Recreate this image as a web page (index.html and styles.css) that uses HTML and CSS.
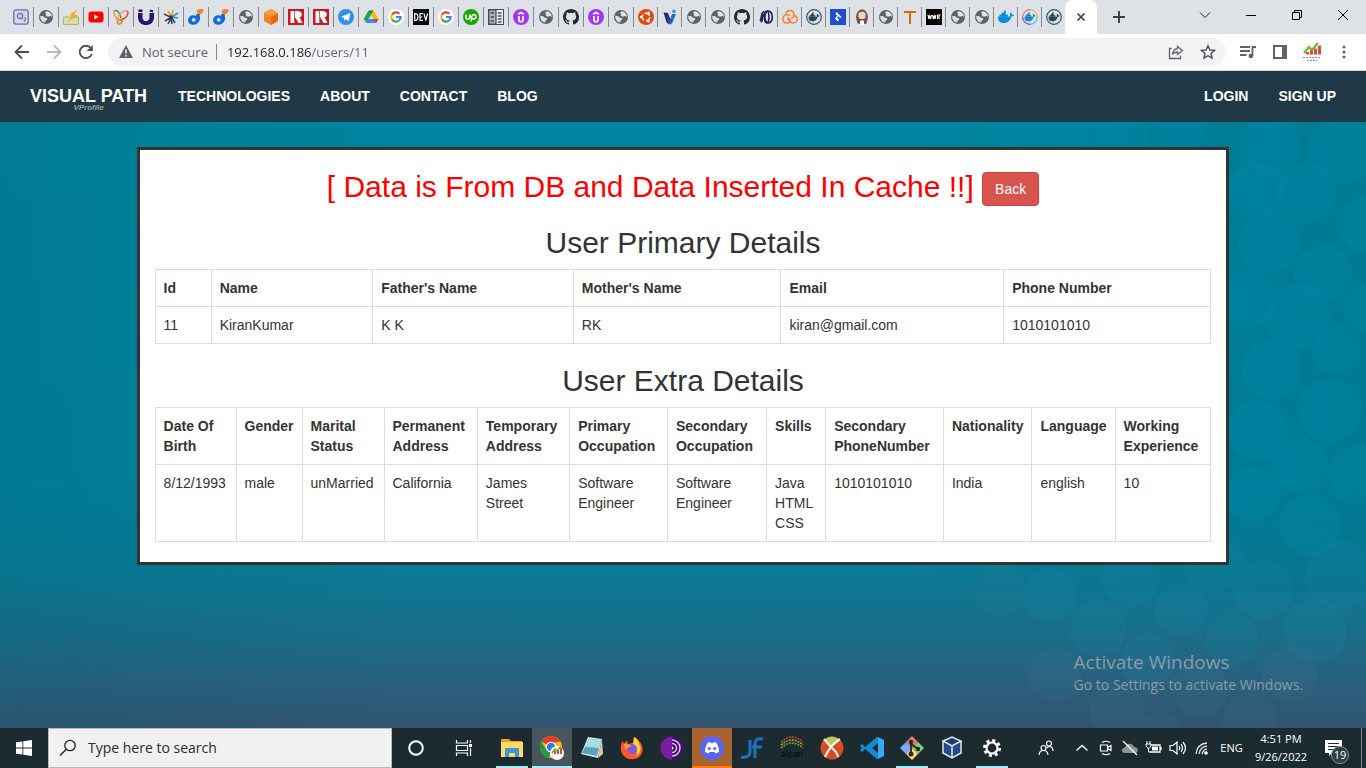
FILE: index.html
```html
<!DOCTYPE html>
<html lang="en">
<head>
<meta charset="utf-8">
<title>User Details</title>
<link rel="stylesheet" href="styles.css">
</head>
<body>
<svg class="defs" aria-hidden="true">
  <symbol id="globe" viewBox="0 0 16 16"><circle cx="8" cy="8" r="7" fill="#5f6368"/><path d="M2.300 6.700 5.200 7.200 6.800 8.700 9 9v1.800L7.300 12v1.800A6 6 0 0 1 2.300 6.700zM8.600 2.200 7 4 8.200 5.300l-.4 1.500 2.200.9 2.300-.6 1.600.9A5.900 5.900 0 0 0 8.600 2.200z" fill="#dee1e6"/></symbol>
  <symbol id="search-doc" viewBox="0 0 16 16"><rect x=".8" y=".8" width="14.400" height="14.400" rx="2.500" fill="#d3d5e8" stroke="#6c70a8" stroke-width="1.300"/><circle cx="7" cy="7" r="2.600" fill="none" stroke="#6c70a8" stroke-width="1.300"/><path d="M9 9l1.500 1.500M11 9h1.500v1l-1.500 2h1.800" fill="none" stroke="#6c70a8"/></symbol>
  <symbol id="bolt" viewBox="0 0 16 16"><path d="M.5 8h15v7.500H.5z" fill="#d3dca1" stroke="#a9b77a"/><path d="M2 11h12M2 13.500h12" stroke="#eef3cf" stroke-dasharray="1 1"/><path d="M15 0 6.500 6l3 1L4 13l11-6.500-4-1z" fill="#f8a70c"/></symbol>
  <symbol id="youtube" viewBox="0 0 16 16"><rect x=".5" y="2.500" width="15" height="11" rx="3" fill="#f00"/><path d="M6.300 5.500v5l4.200-2.500z" fill="#fff"/></symbol>
  <symbol id="ribbon" viewBox="0 0 16 16"><g fill="none" stroke-width="1.500"><path d="M1 2.500C4-.5 7 4 8 9" stroke="#22a45a"/><path d="M1 2.500C0 5 3 9 5.500 12" stroke="#f5a21f"/><path d="M5.500 12C3 8 10 0 14.500 2" stroke="#f39a83"/><path d="M14.500 2c1.500 4-2 8-8 9.500" stroke="#ee4638"/><path d="M9 9.500c1 3-1 6-3.500 5.500-2.500-1-.5-4 1-5" stroke="#f5821f"/></g></symbol>
  <symbol id="u-mark" viewBox="0 0 16 16"><path d="M0 4h4.500v4.500c0 5 7 5 7 0V4H16v4.500c0 10-16 10-16 0zM.5.500h4v2.500h-4zM12 .5l3.500 1-.8 2-3.200-1z" fill="#2c136f"/></symbol>
  <symbol id="burst" viewBox="0 0 16 16"><g fill="none" stroke-width="1.600"><path d="M8 8C5 7 3 6 1 5M7 9l-5 3M8 9l-3 6M9 9l3 5M8 9l1 6" stroke="#3e4656"/><path d="M8 7 5 2M9 7l1-6" stroke="#ef9a24"/><path d="m9 8 6-4M9 8l6 1" stroke="#239bd6"/></g><circle cx="8" cy="8" r="1.800" fill="#333"/></symbol>
  <symbol id="d-dot" viewBox="0 0 16 16"><path d="M8 5.500 11.800 4c-.5 3 1 4 0 7-2 6.500-11.500 6-11.800.5C0 7 5 5 8 7z" fill="#0d6ddb"/><circle cx="5.700" cy="10.800" r="1.900" fill="#dee1e6"/><path d="M9 1.500C11-.5 16-.5 15.500 2s-3 3.500-5 3S8.500 3 9 1.500z" fill="#ff8126"/></symbol>
  <symbol id="cube" viewBox="0 0 16 16"><path d="M8 0 15 4v8l-7 4-7-4V4z" fill="#f58220"/><path d="M8 8v8l7-4V4z" fill="#e56b0c"/><path d="M8 0 15 4 8 8 1 4z" fill="#ff9b3e"/></symbol>
  <symbol id="r-mark" viewBox="0 0 16 16"><path d="M0 0h16v16H0z" fill="#d0161f"/><path d="M2.500 2h3.800v12H2.500zM7 2h2.500c5.500 0 5.500 5.800 2 6.300L14.500 14h-4L7 8z" fill="#fff"/></symbol>
  <symbol id="telegram" viewBox="0 0 16 16"><circle cx="8" cy="8" r="8" fill="#3390ec"/><path d="M3 7.800 12.300 4l-1.600 8.200-2.900-2-1.400 1.500-.4-2.600z" fill="#fff"/></symbol>
  <symbol id="drive" viewBox="0 0 16 16"><path d="M5.500 1.500h5L8 6z" fill="#188038"/><path d="M5.500 1.500 8 6l-4.700 8L.8 10z" fill="#18a957"/><path d="m10.500 1.500 5 8.500h-5L8 6z" fill="#ffba00"/><path d="M5.500 10h10l-2.400 4H3.300z" fill="#4285f4"/><path d="M10.500 10h5l-2.400 4z" fill="#ea4335"/></symbol>
  <symbol id="google" viewBox="0 0 16 16"><circle cx="8" cy="8" r="8" fill="#fff"/><g fill="none" stroke-width="2.200"><path d="M11.400 4.800A4.700 4.700 0 0 0 3.900 5.800" stroke="#ea4335"/><path d="M3.900 5.700a4.700 4.700 0 0 0 0 4.600" stroke="#fbbc05"/><path d="M3.900 10.200a4.700 4.700 0 0 0 7.200 1.300" stroke="#34a853"/><path d="M11.100 11.500A4.500 4.500 0 0 0 12.700 8H8" stroke="#4285f4"/></g></symbol>
  <symbol id="dev" viewBox="0 0 16 16"><path d="M0 0h16v16H0z" fill="#080808"/><path d="M1.700 4.500v7C6 12 6 4 1.700 4.500zM10 4.700H7v6.600h3M7 8h2.500M11 4.500l1.800 7 1.800-7" fill="none" stroke="#fff" stroke-width="1.200"/></symbol>
  <symbol id="upwork" viewBox="0 0 16 16"><circle cx="8" cy="8" r="8" fill="#14a800"/><path d="M3 5.500v2.700c0 2.600 3.600 2.600 3.600 0V5.500C7.500 8 9 10 10.700 10c3 0 3-4.500 0-4.500C8.800 5.500 8.500 8 8 12.500" fill="none" stroke="#fff" stroke-width="1.400"/></symbol>
  <symbol id="news" viewBox="0 0 16 16"><path d="M.7.700h14.600v14.600H.7z" fill="#a7b8c4" stroke="#3d4d5a" stroke-width="1.400"/><path d="M8 1h7v14H8z" fill="#eceff1"/><path d="M8 0v16M2.500 4h3.500M2.500 8h3.500M2.500 12h3.500M10 4h3.500M10 7h3.500M10 10h3.500M10 13h3.500" stroke="#3d4d5a" stroke-width="1.300"/></symbol>
  <symbol id="udemy" viewBox="0 0 16 16"><circle cx="8" cy="8" r="8" fill="#a435f0"/><path d="M5.900 7v3.500c0 3 4.200 3 4.200 0V7M5 5.300 8 3.500l3 1.800" fill="none" stroke="#fff" stroke-width="1.700"/></symbol>
  <symbol id="github" viewBox="0 0 16 16"><path fill="#24292f" d="M8 0C3.580 0 0 3.580 0 8c0 3.540 2.290 6.530 5.470 7.590.4.070.55-.17.55-.38 0-.19-.01-.82-.01-1.490-2.010.37-2.530-.49-2.690-.94-.09-.23-.48-.94-.82-1.130-.28-.15-.68-.52-.01-.53.63-.01 1.080.58 1.230.82.72 1.210 1.870.87 2.330.66.07-.52.280-.87.510-1.070-1.780-.2-3.640-.89-3.640-3.950 0-.87.31-1.590.82-2.150-.08-.2-.36-1.020.08-2.120 0 0 .67-.21 2.200.82a7.700 7.700 0 0 1 4 0c1.530-1.040 2.200-.82 2.200-.82.44 1.100.16 1.920.08 2.120.51.56.82 1.270.82 2.150 0 3.070-1.870 3.750-3.650 3.950.29.250.54.730.54 1.480 0 1.070-.01 1.930-.01 2.200 0 .21.150.46.550.38A8.010 8.010 0 0 0 16 8c0-4.420-3.580-8-8-8z"/></symbol>
  <symbol id="ubuntu" viewBox="0 0 16 16"><circle cx="8" cy="8" r="8" fill="#e3470e"/><circle cx="8" cy="8" r="3.800" fill="none" stroke="#fff" stroke-width="1.500" stroke-dasharray="6 2"/><circle cx="3.200" cy="8" r="1.300" fill="#fff"/><circle cx="10.600" cy="3.700" r="1.300" fill="#fff"/><circle cx="10.600" cy="12.300" r="1.300" fill="#fff"/></symbol>
  <symbol id="vi" viewBox="0 0 16 16"><path d="M10 5h4l-3.500 8.500c-1.500 2.500-4 2.500-5 0L8 11z" fill="#1678b8"/><path d="M1.500 3.500 6 4l3 8c-1 4-3.500 3-4.500 1z" fill="#2b1b83"/><path d="M5 4l2 7 4-1-3 5H6z" fill="#2357a5"/><circle cx="12" cy="2.200" r="1.700" fill="#249bd7"/></symbol>
  <symbol id="coil" viewBox="0 0 16 16"><g fill="none" stroke="#1d2154" stroke-width="1.600"><ellipse cx="10.500" cy="8" rx="3.800" ry="6"/><ellipse cx="8.700" cy="8" rx="2.200" ry="6"/><path d="M6.500 2.500c-4.500 1-2 6-4.500 9.500M6.500 5c-3 2-1 6-3.500 8.500"/></g></symbol>
  <symbol id="cloud-knot" viewBox="0 0 16 16"><g fill="none" stroke="#ff7f32" stroke-width="1.500"><path d="M4 6C4 0 12 0 12 6c0 2-1 3-3 3M12 6c5 2 4 8-1 8-2 0-3-1-5-4"/><path d="M8 7C5 4 1 6 1 10c0 5 6 5 7 2 0-2-1-3-3-3"/></g></symbol>
  <symbol id="whale" viewBox="0 0 16 16"><path d="M0 7.500h12c.2-1 .2-2-.3-3l1-1c.9.700 1.200 1.400 1.300 2 .8 0 1.500.2 2 .6-.6 1.200-1.600 1.500-2.700 1.400C11.800 12.500 9 14 5.500 14 2 14 0 12 0 7.500z"/><path d="M1.500 5.400h8.400v2.400H1.500zM3.700 3.400h4v2.200h-4zM5.900 1.400h1.800v2.200H5.900z"/></symbol>
  <symbol id="whale-ring" viewBox="0 0 16 16"><circle cx="8" cy="8" r="7.300" fill="none" stroke="#335668" stroke-width="1.200"/><use href="#whale" x="2.300" y="2.300" width="11.400" height="11.400" fill="#274558"/></symbol>
  <symbol id="whale-color" viewBox="0 0 16 16"><g fill="none" stroke-width="1.200"><path d="M8 .7a7.300 7.300 0 0 1 7.300 7.300" stroke="#f3b765"/><path d="M15.300 8A7.300 7.300 0 0 1 8 15.300" stroke="#35c4e8"/><path d="M8 15.300A7.300 7.300 0 0 1 .7 8" stroke="#6b57b5"/><path d="M.7 8A7.300 7.300 0 0 1 8 .7" stroke="#ef6d88"/></g><use href="#whale" x="2.300" y="2.300" width="11.400" height="11.400" fill="#1488c6"/></symbol>
  <symbol id="toptal" viewBox="0 0 16 16"><path d="M0 0h16v16H0z" fill="#204ecf"/><path d="m6.500 3 5 5-1.200 1-1.800-1.800L7 8.500l2 2L8 12.500l-3-3 2.300-2.800L5.500 5z" fill="#fff"/></symbol>
  <symbol id="jenkins" viewBox="0 0 16 16"><ellipse cx="8" cy="8" rx="6" ry="7.500" fill="#85504b"/><ellipse cx="8" cy="6" rx="3.600" ry="4.500" fill="#efd4b9"/><path d="M4 5c0-6 8-6 8 0-2-3-6-3-8 0z" fill="#6a5f58"/><path d="M4 10h8l1 4-5 2-5-2z" fill="#4b5965"/><path d="M6 11h4v5H6z" fill="#fff"/><path d="m6 10 4 2v-2l-4 2z" fill="#c52b2b"/></symbol>
  <symbol id="t-mark" viewBox="0 0 16 16"><path d="M2 2h12v2H9v11H7V4H2z" fill="#cf6a0d"/></symbol>
  <symbol id="wwr" viewBox="0 0 16 16"><path d="M0 0h16v16H0z"/><path d="m2 6 .8 4 .9-3 .9 3 .7-4M6.500 6l.8 4 .9-3 .9 3 .7-4M11.500 10V6h1.300c1.200 0 1 2-.5 2l1.400 2" fill="none" stroke="#fff" stroke-width="1.100"/><circle cx="14.200" cy="5.500" r="1" fill="#e33"/></symbol>
</svg>

<header class="browser">
  <div class="tabstrip">
    <div class="tabs" role="tablist">
      <button class="tab" role="tab" aria-label="Tab 1"><svg><use href="#search-doc"/></svg></button>
      <button class="tab" role="tab" aria-label="Tab 2"><svg><use href="#globe"/></svg></button>
      <button class="tab" role="tab" aria-label="Tab 3"><svg><use href="#bolt"/></svg></button>
      <button class="tab" role="tab" aria-label="Tab 4"><svg><use href="#youtube"/></svg></button>
      <button class="tab" role="tab" aria-label="Tab 5"><svg><use href="#ribbon"/></svg></button>
      <button class="tab" role="tab" aria-label="Tab 6"><svg><use href="#u-mark"/></svg></button>
      <button class="tab" role="tab" aria-label="Tab 7"><svg><use href="#burst"/></svg></button>
      <button class="tab" role="tab" aria-label="Tab 8"><svg><use href="#d-dot"/></svg></button>
      <button class="tab" role="tab" aria-label="Tab 9"><svg><use href="#d-dot"/></svg></button>
      <button class="tab" role="tab" aria-label="Tab 10"><svg><use href="#globe"/></svg></button>
      <button class="tab" role="tab" aria-label="Tab 11"><svg><use href="#cube"/></svg></button>
      <button class="tab" role="tab" aria-label="Tab 12"><svg><use href="#r-mark"/></svg></button>
      <button class="tab" role="tab" aria-label="Tab 13"><svg><use href="#r-mark"/></svg></button>
      <button class="tab" role="tab" aria-label="Tab 14"><svg><use href="#telegram"/></svg></button>
      <button class="tab" role="tab" aria-label="Tab 15"><svg><use href="#drive"/></svg></button>
      <button class="tab" role="tab" aria-label="Tab 16"><svg><use href="#google"/></svg></button>
      <button class="tab" role="tab" aria-label="Tab 17"><svg><use href="#dev"/></svg></button>
      <button class="tab" role="tab" aria-label="Tab 18"><svg><use href="#google"/></svg></button>
      <button class="tab" role="tab" aria-label="Tab 19"><svg><use href="#upwork"/></svg></button>
      <button class="tab" role="tab" aria-label="Tab 20"><svg><use href="#news"/></svg></button>
      <button class="tab" role="tab" aria-label="Tab 21"><svg><use href="#udemy"/></svg></button>
      <button class="tab" role="tab" aria-label="Tab 22"><svg><use href="#globe"/></svg></button>
      <button class="tab" role="tab" aria-label="Tab 23"><svg><use href="#github"/></svg></button>
      <button class="tab" role="tab" aria-label="Tab 24"><svg><use href="#udemy"/></svg></button>
      <button class="tab" role="tab" aria-label="Tab 25"><svg><use href="#globe"/></svg></button>
      <button class="tab narrow" role="tab" aria-label="Tab 26"><svg><use href="#ubuntu"/></svg></button>
      <button class="tab narrow" role="tab" aria-label="Tab 27"><svg><use href="#vi"/></svg></button>
      <button class="tab narrow" role="tab" aria-label="Tab 28"><svg><use href="#globe"/></svg></button>
      <button class="tab narrow" role="tab" aria-label="Tab 29"><svg><use href="#globe"/></svg></button>
      <button class="tab narrow" role="tab" aria-label="Tab 30"><svg><use href="#github"/></svg></button>
      <button class="tab narrow" role="tab" aria-label="Tab 31"><svg><use href="#coil"/></svg></button>
      <button class="tab narrow" role="tab" aria-label="Tab 32"><svg><use href="#cloud-knot"/></svg></button>
      <button class="tab narrow" role="tab" aria-label="Tab 33"><svg><use href="#whale-ring"/></svg></button>
      <button class="tab narrow" role="tab" aria-label="Tab 34"><svg><use href="#toptal"/></svg></button>
      <button class="tab narrow" role="tab" aria-label="Tab 35"><svg><use href="#jenkins"/></svg></button>
      <button class="tab narrow" role="tab" aria-label="Tab 36"><svg><use href="#globe"/></svg></button>
      <button class="tab narrow" role="tab" aria-label="Tab 37"><svg><use href="#t-mark"/></svg></button>
      <button class="tab narrow" role="tab" aria-label="Tab 38"><svg><use href="#wwr"/></svg></button>
      <button class="tab narrow" role="tab" aria-label="Tab 39"><svg><use href="#globe"/></svg></button>
      <button class="tab narrow" role="tab" aria-label="Tab 40"><svg><use href="#globe"/></svg></button>
      <button class="tab narrow" role="tab" aria-label="Tab 41"><svg fill="#0091dd"><use href="#whale"/></svg></button>
      <button class="tab narrow" role="tab" aria-label="Tab 42"><svg><use href="#whale-color"/></svg></button>
      <button class="tab narrow last" role="tab" aria-label="Tab 43"><svg><use href="#whale-ring"/></svg></button>
      <button class="tab-active" role="tab" aria-selected="true" aria-label="Close tab"><svg width="10" height="10" viewBox="0 0 10 10"><path d="M1.500 1.500l7 7M8.500 1.500l-7 7" stroke="#3c4043" stroke-width="1.700"/></svg></button>
      <button class="new-tab" aria-label="New tab"><svg width="14" height="14" viewBox="0 0 14 14"><path d="M7 1v12M1 7h12" stroke="#3c4043" stroke-width="1.900"/></svg></button>
    </div>
    <div class="window-buttons">
      <button aria-label="Search tabs"><svg width="12" height="12" viewBox="0 0 12 12"><path d="M1 3.500l5 5 5-5" fill="none" stroke="#222"/></svg></button>
      <button aria-label="Minimize"><svg width="12" height="12" viewBox="0 0 12 12"><path d="M1 6.500h10" stroke="#000"/></svg></button>
      <button aria-label="Restore"><svg width="12" height="12" viewBox="0 0 12 12"><path d="M1.500 3.500h7v7h-7zM3.500 3.500v-2h7v7h-2" fill="none" stroke="#000"/></svg></button>
      <button aria-label="Close"><svg width="12" height="12" viewBox="0 0 12 12"><path d="M1 1l10 10M11 1L1 11" stroke="#000"/></svg></button>
    </div>
  </div>
  <div class="toolbar">
    <button aria-label="Back"><svg width="16" height="16" viewBox="0 0 16 16"><path d="M15 8H2M8 1.500 1.500 8 8 14.500" fill="none" stroke="#4b4f54" stroke-width="1.800"/></svg></button>
    <button aria-label="Forward"><svg width="16" height="16" viewBox="0 0 16 16"><path d="M1 8h13M8 1.500 14.500 8 8 14.500" fill="none" stroke="#b8babc" stroke-width="1.800"/></svg></button>
    <button aria-label="Reload"><svg width="16" height="16" viewBox="0 0 16 16"><path d="M13.800 10A6.200 6.200 0 1 1 12.800 4" fill="none" stroke="#4b4f54" stroke-width="1.900"/><path d="M14.800 1v6H8.800z" fill="#4b4f54"/></svg></button>
    <div class="omnibox">
      <svg width="14" height="14" viewBox="0 0 14 14"><path d="M7 0 14 13H0z" fill="#5f6368"/><path d="M7 4.500v4M7 9.800v1.600" stroke="#f1f3f4" stroke-width="1.500"/></svg>
      <span class="insecure">Not secure</span>
      <input class="url" aria-label="Address" value="192.168.0.186/users/11">
      <button aria-label="Share"><svg width="16" height="16" viewBox="0 0 16 16"><path d="M3.500 4.500H1.500v10h11v-3M9.500 2.500 14.500 6.500l-5 4V8C7 8 5.500 9 4.500 10.500 5 7 7 5 9.500 4.700z" fill="none" stroke="#5f6368" stroke-width="1.300"/></svg></button>
      <button aria-label="Bookmark"><svg width="16" height="16" viewBox="0 0 16 16"><path d="m8 1.700 1.900 4.300 4.600.4-3.500 3.100 1 4.600L8 11.700l-4 2.400 1-4.600L1.500 6.400 6.100 6z" fill="none" stroke="#4b4f54" stroke-width="1.400"/></svg></button>
    </div>
    <div class="toolbar-end">
      <button aria-label="Media"><svg width="16" height="16" viewBox="0 0 16 16"><path d="M0 3h10M0 7h10M0 11h6.500M12.500 12V3H16" fill="none" stroke="#5f6368" stroke-width="1.800"/><circle cx="10.800" cy="12" r="2.300" fill="#5f6368"/></svg></button>
      <button aria-label="Side panel"><svg width="14" height="14" viewBox="0 0 14 14"><path d="M1 1h12v12H1z" fill="#fff" stroke="#5f6368" stroke-width="2"/><path d="M9 1h4v12H9z" fill="#5f6368"/></svg></button>
      <button aria-label="Profile"><svg width="20" height="20" viewBox="0 0 20 20"><circle cx="10" cy="10" r="10" fill="#fbfbfb"/><path d="M4 12.500V10h3v2.500zM8 12.500V8h3v4.500zM12 12.500v-6h3v6zM16 12.500v-9h3v9z" fill="#df4a32"/><path d="m2 11 5-6 3 3 6-7" fill="none" stroke="#68b52c" stroke-width="2"/><path d="M1 15.500h18M5 18.500h10" stroke="#7f95a8" stroke-dasharray="2 1"/></svg></button>
      <button aria-label="Menu"><svg width="4" height="16" viewBox="0 0 4 16" fill="#5f6368"><circle cx="2" cy="3" r="1.500"/><circle cx="2" cy="8" r="1.500"/><circle cx="2" cy="13" r="1.500"/></svg></button>
    </div>
  </div>
</header>

<nav class="navbar">
  <a class="brand" href="#"><span>VISUAL PATH</span><small class="brand-sub">VProfile</small></a>
  <ul class="nav-list">
    <li><a href="#">TECHNOLOGIES</a></li>
    <li><a href="#">ABOUT</a></li>
    <li><a href="#">CONTACT</a></li>
    <li><a href="#">BLOG</a></li>
  </ul>
  <ul class="nav-list nav-end">
    <li><a href="#">LOGIN</a></li>
    <li><a href="#">SIGN UP</a></li>
  </ul>
</nav>

<main class="page">
  <svg class="bubbles" viewBox="0 122 1366 606" preserveAspectRatio="xMaxYMid slice" aria-hidden="true">
    <defs>
      <linearGradient id="shade"><stop offset="0" stop-color="#00667c" stop-opacity="0"/><stop offset="1" stop-color="#00667c" stop-opacity=".3"/></linearGradient>
    </defs>
    <path d="M900 122h466v470H900z" fill="url(#shade)"/>
    <g fill="#0090b0" fill-opacity=".24">
      <circle cx="1323" cy="273" r="29"/><circle cx="1269" cy="243" r="31"/><circle cx="1306" cy="193" r="30"/><circle cx="1342" cy="150" r="34"/><circle cx="1257" cy="190" r="28"/><circle cx="1270" cy="145" r="30"/><circle cx="1299" cy="317" r="33"/><circle cx="1366" cy="308" r="23"/><circle cx="1250" cy="300" r="28"/><circle cx="1336" cy="350" r="24"/><circle cx="1366" cy="225" r="28"/><circle cx="1272" cy="370" r="30"/><circle cx="1330" cy="410" r="32"/><circle cx="1258" cy="430" r="30"/><circle cx="1300" cy="465" r="28"/><circle cx="1358" cy="475" r="30"/><circle cx="1252" cy="495" r="28"/><circle cx="1310" cy="525" r="31"/><circle cx="1010" cy="130" r="24"/><circle cx="1065" cy="125" r="26"/><circle cx="1120" cy="132" r="28"/><circle cx="1180" cy="125" r="26"/>
    </g>
    <g fill="#1b8db0" fill-opacity=".14">
      <circle cx="1050" cy="595" r="27"/><circle cx="1130" cy="578" r="29"/><circle cx="1098" cy="628" r="29"/><circle cx="1181" cy="610" r="27"/><circle cx="1213" cy="563" r="30"/><circle cx="1263" cy="590" r="30"/><circle cx="1232" cy="640" r="26"/><circle cx="1148" cy="660" r="27"/><circle cx="1340" cy="575" r="35"/><circle cx="1315" cy="630" r="32"/>
    </g>
    <g fill="#3f7896" fill-opacity=".12"><circle cx="1055" cy="675" r="27"/><circle cx="1000" cy="590" r="26"/><circle cx="1117" cy="710" r="28"/><circle cx="1200" cy="690" r="28"/><circle cx="1250" cy="722" r="28"/><circle cx="1290" cy="675" r="28"/><circle cx="1160" cy="738" r="25"/></g>
  </svg>
  <section class="panel">
    <h2><span class="notice">[ Data is From DB and Data Inserted In Cache !!]</span> <button class="btn-back">Back</button></h2>
    <h2>User Primary Details</h2>
    <table>
      <thead><tr><th>Id</th><th>Name</th><th>Father's Name</th><th>Mother's Name</th><th>Email</th><th>Phone Number</th></tr></thead>
      <tbody><tr><td>11</td><td>KiranKumar</td><td>K K</td><td>RK</td><td>kiran@gmail.com</td><td>1010101010</td></tr></tbody>
    </table>
    <h2>User Extra Details</h2>
    <table>
      <thead><tr><th>Date Of Birth</th><th>Gender</th><th>Marital Status</th><th>Permanent Address</th><th>Temporary Address</th><th>Primary Occupation</th><th>Secondary Occupation</th><th>Skills</th><th>Secondary PhoneNumber</th><th>Nationality</th><th>Language</th><th>Working Experience</th></tr></thead>
      <tbody><tr><td>8/12/1993</td><td>male</td><td>unMarried</td><td>California</td><td>James Street</td><td>Software Engineer</td><td>Software Engineer</td><td>Java HTML CSS</td><td>1010101010</td><td>India</td><td>english</td><td>10</td></tr></tbody>
    </table>
  </section>
  <aside class="watermark"><p class="watermark-title">Activate Windows</p><p>Go to Settings to activate Windows.</p></aside>
</main>

<footer class="taskbar">
  <button class="wide" aria-label="Start"><svg width="16" height="16" viewBox="0 0 16 16"><path d="M0 2.300 6.500 1.400v6.200H0zM7.300 1.300 16 0v7.600H7.300zM0 8.400h6.500v6.200L0 13.700zM7.300 8.400H16V16l-8.700-1.300z" fill="#fff"/></svg></button>
  <label class="search">
    <svg width="18" height="18" viewBox="0 0 18 18"><circle cx="11" cy="6.500" r="5.200" fill="none" stroke="#222" stroke-width="1.300"/><path d="M7.300 10.200 1 16.500" stroke="#222" stroke-width="1.400"/></svg>
    <input placeholder="Type here to search" aria-label="Search">
  </label>
  <button class="wide" aria-label="Cortana"><svg width="18" height="18" viewBox="0 0 18 18"><circle cx="9" cy="9" r="6.800" fill="none" stroke="#fff" stroke-width="2"/></svg></button>
  <button class="wide" aria-label="Task view"><svg width="18" height="18" viewBox="0 0 18 18"><path d="M1.500 1v3h11V1M1.500 17v-3h11v3M1.500 6.500h11v5h-11zM15.500 1v3M15.500 9v8" fill="none" stroke="#fff" stroke-width="1.200"/><path d="M14 5h3v3h-3z" fill="#fff"/></svg></button>
  <div class="apps">
    <button class="open" aria-label="Files"><svg viewBox="0 0 24 24"><path d="M1 3h8l2 2h11v15H1z" fill="#e5a31d"/><path d="M1 6h22v15H1z" fill="#ffd866"/><path d="M5 21v-9h14v9h-4v-4H9v4z" fill="#3a95dd"/></svg></button>
    <button class="open current" aria-label="Chrome"><svg viewBox="0 0 24 24"><circle cx="11" cy="11" r="11" fill="#fbc116"/><path d="M1.500 5.500a11 11 0 0 1 19 0L11 7v4z" fill="#e33b2e"/><path d="M1.500 5.500 6 13l5 3-2 6A11 11 0 0 1 1.500 5.500z" fill="#279847"/><circle cx="11" cy="11" r="5.300" fill="#fff"/><circle cx="11" cy="11" r="4.200" fill="#3478e5"/><circle cx="17" cy="17" r="7" fill="#fff"/><path d="M14 18v-3h2v3zM17 18v-4h2v4zM20 18v-6h2v6z" fill="#dc4430"/><path d="m12 17 3-4 2 2 4-5" fill="none" stroke="#68a728" stroke-width="1.500"/></svg></button>
    <button aria-label="Notepad"><svg viewBox="0 0 24 24"><path d="M8 1 22 3l-4 19L1 18z" fill="#d5ecef"/><path d="M9 3 21 4l-4 16L2 17z" fill="#5ba3b4"/><path d="m9 3 12 1-2 8-14-1z" fill="#a8dce6"/><path d="m22 3 1 15-5 4z" fill="#dcc9a7"/></svg></button>
    <button aria-label="Firefox"><svg viewBox="0 0 24 24"><path d="M14 1c5 2 4 4 6 5 3 5 4 9 0 14-5 5-13 4-17-1C-.5 14 .5 8 3 5l1 3c1-2 2-3 3-3l1 3 5-1c0-2 0-4 1-6z" fill="#ff582c"/><path d="M14 1c6 3 4 7 6 8 2 6-1 9-4 11 2-5 1-10-4-11 2-2 2-5 2-8z" fill="#ffd337"/><circle cx="12" cy="13" r="5" fill="#8354dd"/><path d="M4 8c3-1 5 0 8 3-3-1-5 0-5 3-2-1-3-3-3-6z" fill="#ff9825"/></svg></button>
    <button aria-label="Tor"><svg viewBox="0 0 24 24"><circle cx="12" cy="12" r="11.500" fill="#7a1aa5"/><path d="M12 .5a11.500 11.500 0 0 1 0 23z" fill="#3e1169"/><path d="M12 4a8 8 0 0 1 0 16M12 7.500a4.500 4.500 0 0 1 0 9" fill="none" stroke="#e9c6f1" stroke-width="1.500"/><path d="M12 10.500a1.500 1.500 0 0 1 0 3z" fill="#fff"/></svg></button>
    <button class="alert" aria-label="Discord"><svg viewBox="0 0 24 24"><circle cx="12" cy="12" r="12" fill="#5865f2"/><path d="M8 6.500 10 6l.5 1h3l.5-1 2 .5c2 2.500 3 6 3 9-1 1-2 1.500-3.500 2l-1-1.500h-5l-1 1.500C7 17 6 16.500 5 15.500c0-3 1-6.500 3-9z" fill="#fff"/><circle cx="9.300" cy="12.500" r="1.500" fill="#5865f2"/><circle cx="14.700" cy="12.500" r="1.500" fill="#5865f2"/></svg></button>
    <button aria-label="JForex"><svg viewBox="0 0 24 24"><path d="M10 4v12c0 4-4 6-9 5M15 22V8c0-4 2-6 8-5M12 11h10" fill="none" stroke="#1874bd" stroke-width="3"/></svg></button>
    <button class="app-alpari" aria-label="Alpari"><svg viewBox="0 0 24 14"><g fill="none" stroke-width="1.800" stroke-dasharray="2 1"><path d="M1 6Q12-4 23 6" stroke="#b7402c"/><path d="M1 9Q12-1 23 9" stroke="#a9972b"/><path d="M1 12Q12 2 23 12" stroke="#5d9f3a"/></g></svg><span>alpari</span></button>
    <button aria-label="Terminal"><svg viewBox="0 0 24 24"><circle cx="12" cy="12" r="11.500" fill="#d94b25"/><path d="M4 4Q12 14 20 4Q12-3 4 4z" fill="#b5c957"/><path d="M4 3q6 7 8 9M20 3c-5 3-11 9-15 18M12 12q5 4 6 9" fill="none" stroke="#f8eee6" stroke-width="2.200"/></svg></button>
    <button aria-label="VS Code"><svg viewBox="0 0 24 24"><path d="m17 1 7 3v16l-7 3L5 13l-3 3-2-2 2-2-2-2 2-2 3 3zM18 7l-6 5 6 5z" fill="#168bd4" fill-rule="evenodd"/><path d="m18 1 6 3v16l-6 3z" fill="#35a9ef"/></svg></button>
    <button class="open" aria-label="Git"><svg viewBox="0 0 24 24"><path d="m12 0 6 6-6 6-6-6z" fill="#f07178"/><path d="m6 6 6 6-6 6-6-6z" fill="#7daaf4"/><path d="m18 6 6 6-6 6-6-6z" fill="#80d36b"/><path d="m12 12 6 6-6 6-6-6z" fill="#ffda68"/><path d="M11 5v14M11 8l7 5" stroke="#25282a" stroke-width="1.800"/><g fill="#25282a"><circle cx="11" cy="6" r="2.200"/><circle cx="11" cy="18" r="2.500"/><circle cx="18" cy="13" r="2.200"/></g></svg></button>
    <button aria-label="VirtualBox"><svg viewBox="0 0 24 24"><path d="M12 1 21 5v13l-9 5-9-5V5z" fill="#234d83"/><path d="m3 5 9-4 9 4-9 5z" fill="#193f72"/><path d="m3 5 9-4 9 4-9 5zM12 10v12M3 5v12l9 5 9-5V5" fill="none" stroke="#dbe6f1" stroke-width="1.500"/></svg></button>
    <button class="open" aria-label="Settings"><svg viewBox="0 0 24 24"><circle cx="12" cy="12" r="7.500" fill="none" stroke="#fff" stroke-width="3" stroke-dasharray="3 2.890"/><circle cx="12" cy="12" r="5.500" fill="none" stroke="#fff" stroke-width="2.200"/></svg></button>
  </div>
  <div class="tray">
    <button class="wide" aria-label="People"><svg width="16" height="16" viewBox="0 0 16 16"><g fill="none" stroke="#fff" stroke-width="1.200"><circle cx="11" cy="3.500" r="2.500"/><circle cx="5.500" cy="8" r="2.500"/><path d="M1 15c.5-6 8.500-6 9 0M9 8c2-3 6-1.500 6 3"/></g></svg></button>
    <button class="small" aria-label="Hidden icons"><svg width="16" height="16" viewBox="0 0 16 16"><path d="m2.500 10.500 5.500-5 5.500 5" fill="none" stroke="#fff" stroke-width="1.300"/></svg></button>
    <button class="small" aria-label="Meet now"><svg width="16" height="16" viewBox="0 0 16 16"><path d="M2.500 5h7v6h-7zM9.500 7.500 13 5.500v5l-3.500-2M4 2.500q4-2.500 8 0M4 13.500q4 2.500 8 0" fill="none" stroke="#fff" stroke-width="1.200"/></svg></button>
    <button class="small" aria-label="OneDrive"><svg width="18" height="16" viewBox="0 0 18 16"><path d="M4 13C0 13 0 8 4 7.500 5 3 11 2 13 7c5 0 5 6 1 6z" fill="#8e9698"/><path d="m2 1 14 14" stroke="#fff" stroke-width="1.200"/></svg></button>
    <button class="small" aria-label="Battery"><svg width="18" height="16" viewBox="0 0 18 16"><path d="M6 5h9v7H5M16 7v3" fill="none" stroke="#fff" stroke-width="1.300"/><path d="M7 6.500h6v4H7z" fill="#fff"/><path d="M2 1v3M5 1v3M1 4h5c0 3-1 4-2.500 4S1 7 1 4zM3.500 8v4H6" fill="none" stroke="#fff"/></svg></button>
    <button class="small" aria-label="Volume"><svg width="18" height="16" viewBox="0 0 18 16"><path d="M1 5.500h3l4-3.500v12l-4-3.500H1zM10 6q1.500 2 0 4M12 4q3 4 0 8M14 2q5 6 0 12" fill="none" stroke="#fff" stroke-width="1.200"/></svg></button>
    <button class="small" aria-label="Network"><svg width="16" height="16" viewBox="0 0 16 16"><path d="M2 14Q3 4 13 3M5 14q1-7 8-8M8 14q1-4 5-5" fill="none" stroke="#ddd" stroke-width="1.300"/><circle cx="12" cy="13" r="1.800" fill="#fff"/></svg></button>
    <button class="lang">ENG</button>
    <button class="clock"><time>4:51 PM</time><time>9/26/2022</time></button>
    <button class="notify" aria-label="Notifications"><svg width="18" height="16" viewBox="0 0 18 16"><path d="M0 0h17v13H7l-3 3v-3H0z" fill="#fff"/><path d="M3 3.500h11M3 6.500h11M3 9.500h7" stroke="#1c2b30" stroke-width="1.200"/></svg><span class="badge">19</span></button>
    <button class="desktop" aria-label="Show desktop"></button>
  </div>
</footer>
</body>
</html>
```
FILE: styles.css
```css
* { box-sizing: border-box; }

body {
  margin: 0;
  height: 100vh;
  display: flex;
  flex-direction: column;
  font-family: "Liberation Sans", Arial, sans-serif;
  font-size: 14px;
  line-height: 20px;
  color: #333;
}

button {
  border: 0;
  padding: 0;
  background: none;
  font: inherit;
  color: inherit;
  display: flex;
  align-items: center;
  justify-content: center;
}

input { border: 0; padding: 0; background: none; font: inherit; outline: 0; min-width: 0; }
.defs { position: absolute; width: 0; height: 0; }

/* Browser window */
.browser { flex: none; background: #fff; border-bottom: 1px solid #d5d9dc; font-family: "Open Sans", sans-serif; }
.tabstrip { display: flex; justify-content: space-between; height: 34px; background: #dee1e6; }
.tabs { display: flex; align-items: center; padding-left: 9px; }
.tab { width: 25px; height: 20px; border-right: 1px solid #85898d; }
.tab svg { width: 16px; height: 16px; flex: none; }
.narrow { width: 24px; padding-left: 1px; }
.last { border-right-color: transparent; margin-right: -1px; }
.tab-active { width: 32px; align-self: stretch; background: #fff; border-radius: 8px 8px 0 0; }
.new-tab { width: 44px; height: 28px; }
.window-buttons { display: flex; align-items: center; padding-bottom: 4px; }
.window-buttons button { width: 46px; height: 28px; }

.toolbar { display: flex; align-items: center; height: 36px; padding-left: 6px; }
.toolbar > button { width: 32px; height: 32px; }
.omnibox {
  flex: 1;
  display: flex;
  align-items: center;
  height: 28px;
  margin-left: 6px;
  padding: 0 2px 0 11px;
  border-radius: 14px;
  background: #f1f3f4;
  font-size: 13px;
}
.omnibox button { width: 32px; height: 28px; }
.insecure { margin-left: 9px; padding-right: 8px; border-right: 1px solid #85898d; line-height: 16px; color: #5f6368; }
.url {
  flex: 1;
  margin-left: 10px;
  background: linear-gradient(90deg, #202124 84px, #5f6368 84px);
  background-clip: text;
  color: transparent;
}
.toolbar-end { display: flex; padding-left: 6px; padding-right: 6px; }
.toolbar-end button { width: 32px; height: 28px; }

/* Site navigation */
.navbar {
  flex: none;
  display: flex;
  align-items: center;
  height: 51px;
  padding: 0 30px 2px;
  background: #1f3a46;
  font-weight: bold;
}
.navbar a { color: #fff; text-decoration: none; }
.brand {
  display: flex;
  flex-direction: column;
  align-items: center;
  align-self: flex-start;
  margin-right: 31px;
  padding-top: 17px;
  font-size: 18px;
  line-height: 16px;
}
.brand-sub { font-size: 8px; line-height: 8px; font-style: italic; color: #9aa3a8; }
.nav-list { display: flex; gap: 30px; margin: 0; padding: 0; list-style: none; }
.nav-end { margin-left: auto; }

/* Page */
.page {
  flex: 1;
  position: relative;
  padding-top: 25px;
  overflow: hidden;
  background:
    linear-gradient(90deg, rgba(0, 90, 110, .2), rgba(0, 100, 120, 0) 30%),
    linear-gradient(#00849f, #00829e 60%, #087c97 73%, #176f8a 83%, #29617e 92%, #33546f);
}
.bubbles { position: absolute; inset: 0; width: 100%; height: 100%; }
.panel {
  position: relative;
  width: 80%;
  margin: 0 auto;
  padding: 0 15px;
  border: 3px solid #333;
  background: #fff;
}
h2 { margin: 20px 0 10px; font-size: 30px; line-height: 33px; font-weight: normal; text-align: center; }
.notice { color: #f00; }
.btn-back {
  display: inline-block;
  padding: 6px 12px;
  border: 1px solid #d43f3a;
  border-radius: 4px;
  background: #d9534f;
  color: #fff;
  font-size: 14px;
  line-height: 20px;
  vertical-align: middle;
}
table { width: 100%; margin-bottom: 20px; border-collapse: collapse; }
th, td { padding: 8px; border: 1px solid #ddd; text-align: left; vertical-align: top; }

.watermark {
  position: absolute;
  right: 63px;
  bottom: 32px;
  font-family: "Open Sans", sans-serif;
  color: #8a9ca8;
}
.watermark p { margin: 0; line-height: 22px; }
.watermark .watermark-title { font-size: 19px; line-height: 24px; }

/* Taskbar */
.taskbar {
  flex: none;
  display: flex;
  height: 40px;
  background: #1c2b30;
  color: #fff;
  font-family: "Open Sans", sans-serif;
}
.wide { width: 48px; }
.search {
  display: flex;
  align-items: center;
  width: 344px;
  padding-left: 10px;
  border: 1px solid #b9b9b9;
  background: #f1f1f1;
}
.search input { flex: 1; margin-left: 11px; }
.search input::placeholder { color: #2b2b2b; opacity: 1; }
.apps { display: flex; padding-left: 4px; }
.apps button { width: 40px; }
.apps svg { width: 24px; height: 24px; }
.apps .open { background: linear-gradient(#a5eefb, #a5eefb) center bottom / 32px 2px no-repeat; }
.apps .current { background: linear-gradient(#a5eefb, #a5eefb) center bottom / 100% 2px no-repeat, #48565a; }
.apps .alert { background: linear-gradient(#ff7a00, #ff7a00) center bottom / 100% 2px no-repeat, #a7642f; }
.apps .app-alpari { flex-direction: column; color: #05080a; font-family: "DejaVu Sans", sans-serif; font-size: 8px; line-height: 10px; }
.apps .app-alpari svg { height: 14px; }
.tray { display: flex; margin-left: auto; }
.small { width: 24px; }
.lang { width: 35px; font-size: 11px; }
.clock { width: 64px; flex-direction: column; font-size: 11px; line-height: 18px; }
.notify { width: 48px; position: relative; padding-right: 7px; }
.badge {
  position: absolute;
  right: 12px;
  bottom: 4px;
  width: 18px;
  height: 18px;
  border: 1px solid #8b9396;
  border-radius: 50%;
  background: #2e3b3f;
  font-size: 11px;
  line-height: 16px;
}
.desktop { width: 5px; border-left: 1px solid #7b8487; }
```
